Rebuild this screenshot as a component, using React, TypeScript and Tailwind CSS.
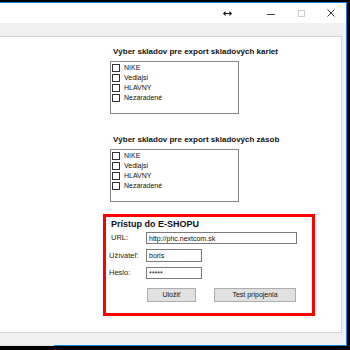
import React from "react";

const font = "font-['Liberation_Sans',Arial,sans-serif]";

const stores = ["NIKE", "Vedlajsi", "HLAVNY", "Nezaradené"];

function StoreList() {
  return (
    <div className="flex h-[53px] w-[129px] flex-col border border-[#828790] bg-white pt-[1px] pl-[1px]">
      {stores.map((s) => (
        <div key={s} className="flex h-[10px] items-center">
          <span className="h-[8px] w-[8px] border border-[#333] bg-white" />
          <span className="ml-[4px] text-[7px] leading-[10px] text-[#111]">{s}</span>
        </div>
      ))}
    </div>
  );
}

function StoreGroup({ title, className = "" }: { title: string; className?: string }) {
  return (
    <div className={`flex flex-col ${className}`}>
      <div className="pl-[3px] text-[8px] font-bold leading-[10px] text-[#111]">{title}</div>
      <div className="mt-[4px]">
        <StoreList />
      </div>
    </div>
  );
}

function Field({
  label,
  value,
  width,
  height,
  labelPad,
}: {
  label: string;
  value: string;
  width: string;
  height: string;
  labelPad: string;
}) {
  return (
    <div className="flex items-center">
      <div className={`w-[40px] text-[7.5px] leading-[10px] text-[#222] ${labelPad}`}>{label}</div>
      <div
        className={`flex items-center border border-[#7a7a7a] bg-white pl-[2px] text-[7px] leading-none text-[#111] ${width} ${height}`}
      >
        {value}
      </div>
    </div>
  );
}

function TitleBar() {
  return (
    <div className="flex h-[20px] items-center justify-end bg-white">
      <div className="flex h-full w-[30px] items-center justify-center">
        <svg width="9" height="5" viewBox="0 0 9 5">
          <path d="M0 2.5 L2.5 0 V5 Z M9 2.5 L6.5 0 V5 Z" fill="#111" />
          <path d="M2 2.5 H7" stroke="#111" strokeWidth="1" />
        </svg>
      </div>
      <div className="w-[14px]" />
      <div className="flex h-full w-[30px] items-center justify-center pt-[2px]">
        <div className="h-[1px] w-[8px] bg-[#444]" />
      </div>
      <div className="flex h-full w-[30px] items-center justify-center">
        <div className="h-[7px] w-[7px] border border-[#cfcfcf]" />
      </div>
      <div className="flex h-full w-[30px] items-center justify-center">
        <svg width="8" height="8" viewBox="0 0 8 8">
          <path d="M0.5 0.5 L7.5 7.5 M7.5 0.5 L0.5 7.5" stroke="#222" strokeWidth="0.9" />
        </svg>
      </div>
    </div>
  );
}

export default function App() {
  return (
    <div className={`flex h-[350px] w-[350px] flex-col bg-black pt-[2px] pr-[3px] pb-[4px] ${font}`}>
      <div className="flex flex-1 flex-col border-t border-r border-[#1883d7]">
        <TitleBar />
        <div className="flex flex-1 flex-col bg-[#f0f0f0] pt-[13px] pr-[4px] pb-[12px]">
          <div className="flex flex-1 flex-col border-t border-r border-b border-[#d5d5d5] bg-white pl-[103px]">
            <StoreGroup className="mt-[10px] ml-[7px]" title="Výber skladov pre export skladových kariet" />
            <StoreGroup className="mt-[21px] ml-[7px]" title="Výber skladov pre export skladových zásob" />

            <div className="mt-[12px] flex h-[102px] w-[212px] flex-col border-[3px] border-[#ff0000]">
              <div className="mt-[2px] pl-[5px] text-[9px] font-bold leading-[10px] text-[#111]">
                Prístup do E-SHOPU
              </div>
              <div className="mt-[3px] flex flex-col gap-[5px]">
                <Field label="URL:" value="http://phc.nextcom.sk" width="w-[151px]" height="h-[12px]" labelPad="pl-[5px]" />
                <Field label="Užívateľ:" value="boris" width="w-[56px]" height="h-[13px]" labelPad="pl-[3px]" />
                <Field label="Heslo:" value="*****" width="w-[56px]" height="h-[12px]" labelPad="pl-[3px]" />
              </div>
              <div className="mt-[9px] flex pl-[41px]">
                <button className="flex h-[14px] w-[49px] items-center justify-center border border-[#adadad] bg-[#e1e1e1] text-[7px] text-[#111]">
                  Uložiť
                </button>
                <button className="ml-[18px] flex h-[14px] w-[82px] items-center justify-center border border-[#adadad] bg-[#e1e1e1] text-[7px] text-[#111]">
                  Test pripojenia
                </button>
              </div>
            </div>
          </div>
        </div>
        <div className="flex h-[1px]">
          <div className="w-[54px] bg-[#e6e6e6]" />
          <div className="flex-1 bg-[#1883d7]" />
        </div>
      </div>
    </div>
  );
}
